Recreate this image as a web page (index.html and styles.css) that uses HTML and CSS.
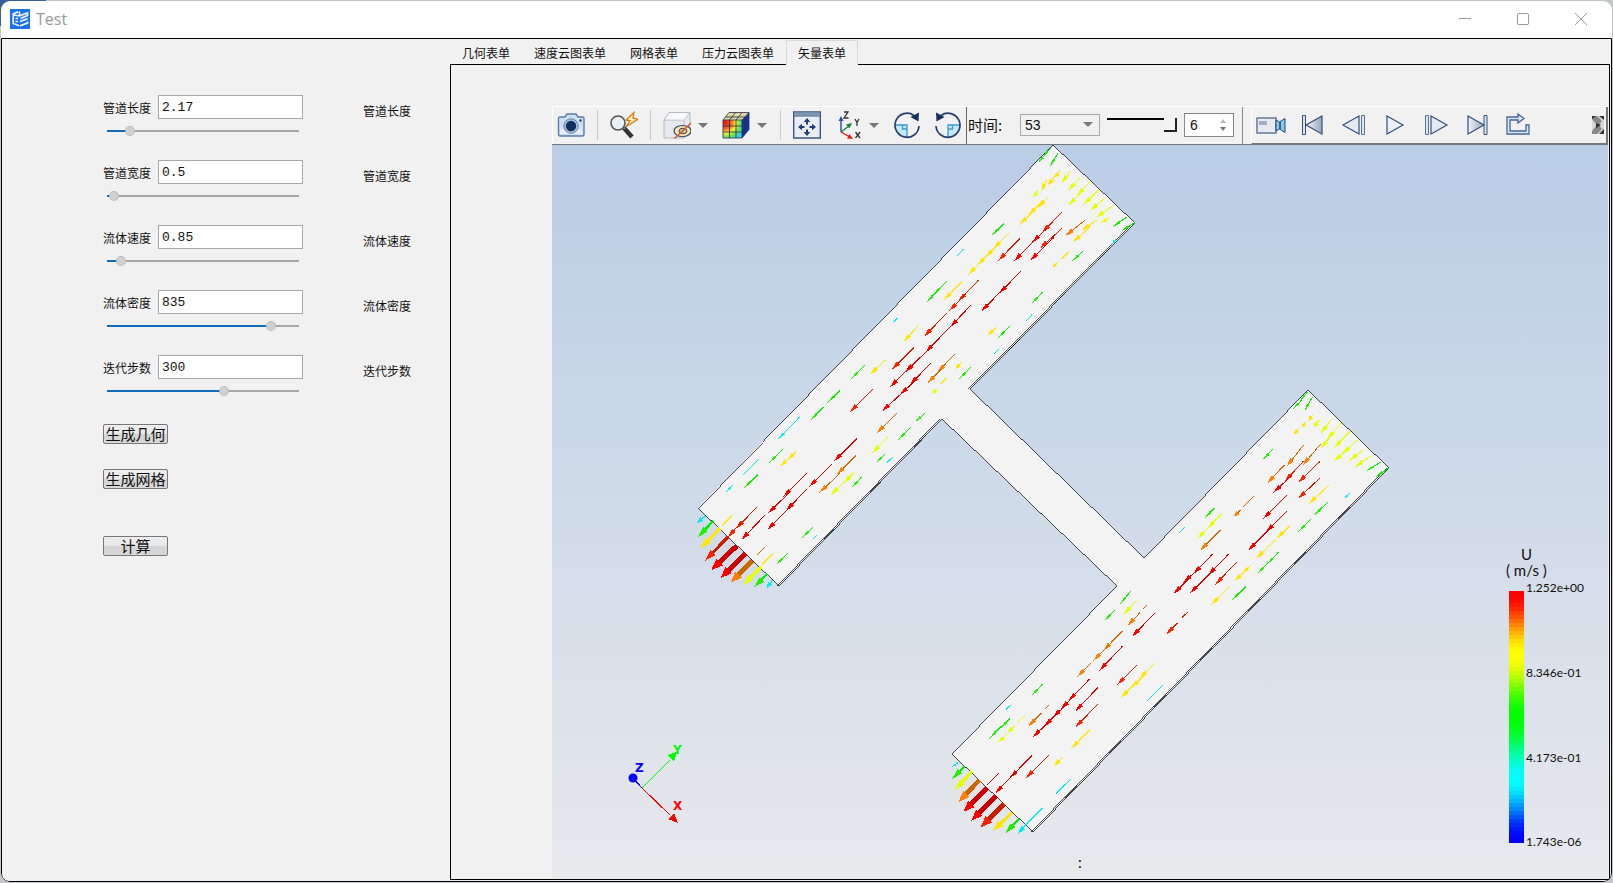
FILE: index.html
```html
<!DOCTYPE html>
<html lang="zh-CN">
<head>
<meta charset="utf-8">
<title>Test</title>
<link rel="stylesheet" href="styles.css">
</head>
<body>
<div class="window">
  <header class="titlebar">
    <svg class="logo" viewBox="0 0 20 20" aria-hidden="true">
      <rect width="20" height="20" fill="#1a73e8"/>
      <path d="M2.500 5.200L8 2.800M9.500 2.500v3.200M2.500 5.500l6.500 1.500 8.500-3v2.500L10.500 9.500M3.200 6v8.500l6 2.200M10 12.500l7.500-2.700M10 16.800l7.500-2.700v-1.500M5.500 9.500h2.500M5.500 12.500h2.500" fill="none" stroke="#f4f8ff" stroke-width="1.600"/>
    </svg>
    <h1 class="title">Test</h1>
    <div class="controls">
      <button class="control" type="button" aria-label="最小化"><svg viewBox="0 0 12 12"><path d="M0 5.500h12"/></svg></button>
      <button class="control" type="button" aria-label="最大化"><svg viewBox="0 0 12 12"><rect x=".5" y=".5" width="11" height="11" rx="1"/></svg></button>
      <button class="control" type="button" aria-label="关闭"><svg viewBox="0 0 12 12"><path d="M0 0l12 12M12 0L0 12"/></svg></button>
    </div>
  </header>

  <main class="frame">
    <form class="form">
      <div class="field">
        <label class="label" for="len">管道长度</label>
        <input class="box" id="len" type="text" value="2.17">
        <span class="label note">管道长度</span>
        <input class="slider" type="range" aria-label="管道长度" max="1000" value="99" style="--fill:10%">
      </div>
      <div class="field">
        <label class="label" for="wid">管道宽度</label>
        <input class="box" id="wid" type="text" value="0.5">
        <span class="label note">管道宽度</span>
        <input class="slider" type="range" aria-label="管道宽度" max="1000" value="11" style="--fill:2%">
      </div>
      <div class="field">
        <label class="label" for="vel">流体速度</label>
        <input class="box" id="vel" type="text" value="0.85">
        <span class="label note">流体速度</span>
        <input class="slider" type="range" aria-label="流体速度" max="1000" value="49" style="--fill:6%">
      </div>
      <div class="field">
        <label class="label" for="den">流体密度</label>
        <input class="box" id="den" type="text" value="835">
        <span class="label note">流体密度</span>
        <input class="slider" type="range" aria-label="流体密度" max="1000" value="874" style="--fill:86%">
      </div>
      <div class="field">
        <label class="label" for="itr">迭代步数</label>
        <input class="box" id="itr" type="text" value="300">
        <span class="label note">迭代步数</span>
        <input class="slider" type="range" aria-label="迭代步数" max="1000" value="615" style="--fill:61%">
      </div>
      <div class="actions">
        <button class="action" type="button">生成几何</button>
        <button class="action" type="button">生成网格</button>
        <button class="action run" type="button">计算</button>
      </div>
    </form>

    <section class="work">
      <nav class="tabs" role="tablist">
        <button class="tab" role="tab" type="button">几何表单</button>
        <button class="tab" role="tab" type="button">速度云图表单</button>
        <button class="tab" role="tab" type="button">网格表单</button>
        <button class="tab" role="tab" type="button">压力云图表单</button>
        <button class="tab active" role="tab" type="button" aria-selected="true">矢量表单</button>
      </nav>
      <div class="panel">
        <div class="viewer">
          <div class="toolbar">
            <div class="tools view-tools">
              <button class="tool" type="button" aria-label="截图"><svg viewBox="0 0 28 28"><path d="M1.500 7.500q0-1.500 1.500-1.500h5l2-3h9l2 3h4.500q1.500 0 1.500 1.500v16q0 1.500-1.500 1.500H3q-1.500 0-1.500-1.500z" fill="#cfdff2" stroke="#5b7ea8" stroke-width="1.400"/><path d="M3 18h22v5H3z" fill="#e6eef8"/><circle cx="14" cy="15" r="7.200" fill="#a9c1dc" stroke="#6482a8"/><circle cx="14" cy="15" r="5.200" fill="#12305e"/><circle cx="23.500" cy="9.500" r="1.200" fill="#27456f"/></svg></button>
              <i class="sep"></i>
              <button class="tool" type="button" aria-label="缩放"><svg viewBox="0 0 28 28"><path d="M14 17l8 9" stroke="#333" stroke-width="4.500"/><path d="M12 15l3 3" stroke="#777" stroke-width="2"/><circle cx="8" cy="12" r="7" fill="#e9f1f7" stroke="#555" stroke-width="1.600"/><path d="M24 1.500L16 9l4 .8-4 6 12-7.600-5-1z" fill="#fff1b8" stroke="#e07a10" stroke-width="1.300"/></svg></button>
              <i class="sep"></i>
              <button class="tool" type="button" aria-label="可见性"><svg viewBox="0 0 28 28"><path d="M1 9l5-7.500h21v19L21 27H1z" fill="#e6e9ee" stroke="#b4bac8"/><path d="M1 9h20v18M21 9l6-7.500" fill="none" stroke="#b4bac8"/><path d="M2 8.500L6.500 2H26l-5 6.500z" fill="#f8f9fb"/><ellipse cx="19.500" cy="20" rx="8.500" ry="5.500" fill="#fbe5ae" stroke="#31476b" stroke-width="1.200"/><ellipse cx="20" cy="20" rx="4" ry="2.800" fill="#d9c184" stroke="#31476b"/><path d="M11.500 27.500L28 12" stroke="#dd5533" stroke-width="1.500"/></svg></button>
              <button class="caret" type="button" aria-label="可见性选项"></button>
              <button class="tool color" type="button" aria-label="云图"><svg viewBox="0 0 28 28"><defs><radialGradient id="hot" cx=".1" cy=".15" r="1.150"><stop offset="0" stop-color="#f01010"/><stop offset=".3" stop-color="#fb6a2a"/><stop offset=".5" stop-color="#f8ee30"/><stop offset=".72" stop-color="#5ee060"/><stop offset=".9" stop-color="#38c8ee"/></radialGradient></defs><path d="M20 9l7-7.500v17L20 27z" fill="#1533a4"/><path d="M1 9l6-7.500h20L20 9z" fill="#dfd9a0"/><rect x="1" y="9" width="19" height="18" fill="url(#hot)"/><path d="M1 9l6-7.500h20v17L20 27H1zM1 9h19v18M20 9l7-7.500M7.500 27V9l6-7.500M14 27V9l6-7.500M1 15h19l7-7M1 21h19l7-7M3.500 6h19.500v17" fill="none" stroke="#24304a" stroke-width=".8"/></svg></button>
              <button class="caret" type="button" aria-label="云图选项"></button>
              <i class="sep tight"></i>
              <button class="tool" type="button" aria-label="适合窗口"><svg viewBox="0 0 28 28"><path d="M.7 1h26.600v26H.7z" fill="#e9edf4" stroke="#3c557f" stroke-width="1.400"/><path d="M1.500 1.500h25v3h-25z" fill="#7d95b5"/><path d="M1 5h26" stroke="#3c557f"/><path d="M14 7l3.300 4h-2.300v2.500h-2V11h-2.300zM14 25l3.300-4h-2.300v-2.500h-2V21h-2.300zM5 16l4-3.300V15h2.500v2H9v2.300zM23 16l-4-3.300V15h-2.500v2H19v2.300z" fill="#1f3f74"/></svg></button>
              <button class="tool axes" type="button" aria-label="视图方向"><svg viewBox="0 0 24 28"><path d="M3 21V8" stroke="#2a4fa8" stroke-width="1.400"/><path d="M3 5l2.500 5h-5z" fill="#2a4fa8"/><path d="M3 21l8-6" stroke="#14883c" stroke-width="1.400"/><path d="M14 12l-2.500 5.500-3.500-4z" fill="#14883c"/><path d="M3 21l8 4.500" stroke="#e41b1b" stroke-width="1.400"/><path d="M15 28l-6-.5 2.500-4.500z" fill="#e41b1b"/><path d="M6 1h4L6 7h4.500M17 8l2 3.500 2-3.500M19 11.500v3.500M17.500 21l4.500 6M22 21l-4.500 6" fill="none" stroke="#333" stroke-width="1.300"/></svg></button>
              <button class="caret" type="button" aria-label="视图方向选项"></button>
              <button class="tool turn" type="button" aria-label="顺时针旋转"><svg viewBox="0 0 28 28"><path d="M2 14h12v12A12 12 0 0 1 2 14z" fill="#c3e8fb"/><path d="M2 14h12v12" fill="none" stroke="#3b9bd0" stroke-width="1.300"/><path d="M9.500 14v4H14" fill="none" stroke="#3b9bd0" stroke-width="1.300"/><path d="M26 15A12 12 0 1 1 21 4.500" fill="none" stroke="#26406e" stroke-width="1.700"/><path d="M26 1.500l-.500 9-8-4.500z" fill="#16305e"/></svg></button>
              <button class="tool turn" type="button" aria-label="逆时针旋转"><svg viewBox="0 0 28 28"><path d="M26 14H14v12a12 12 0 0 0 12-12z" fill="#c3e8fb"/><path d="M26 14H14v12" fill="none" stroke="#3b9bd0" stroke-width="1.300"/><path d="M18.500 14v4H14" fill="none" stroke="#3b9bd0" stroke-width="1.300"/><path d="M2 15A12 12 0 1 0 7 4.500" fill="none" stroke="#26406e" stroke-width="1.700"/><path d="M2 1.500l.500 9 8-4.500z" fill="#16305e"/></svg></button>
            </div>
            <div class="tools time-tools">
              <label class="time-label" for="step">时间:</label>
              <span class="combo"><select id="step"><option>53</option></select></span>
              <input class="frame-slider" type="range" aria-label="帧" value="100">
              <span class="spin">
                <input type="text" aria-label="速度" value="6">
                <span class="spin-buttons"><button class="up" type="button" aria-label="增加"></button><button class="down" type="button" aria-label="减少"></button></span>
              </span>
            </div>
            <div class="tools play-tools">
              <button class="tool rec" type="button" aria-label="录制"><svg viewBox="0 0 30 28"><defs><linearGradient id="steel"><stop offset="0" stop-color="#f2f4f8"/><stop offset="1" stop-color="#9aa6b8"/></linearGradient></defs><rect x="1" y="7" width="19" height="15" fill="#e7ebf1" stroke="#5c7191" stroke-width="1.400"/><rect x="3" y="10" width="8" height="4" fill="#a6afbd"/><path d="M20 9l3.500 2L29 7.500v14L23.500 18 20 20z" fill="#8ac8ec" stroke="#234a78"/><path d="M24 11v7" stroke="#234a78" stroke-width="1.600"/></svg></button>
              <button class="tool first" type="button" aria-label="首帧"><svg viewBox="0 0 28 28"><path d="M3.500 4.500h3v19h-3z" fill="#dfe5ee" stroke="#34507e"/><path d="M23 5v18L7 14z" fill="url(#steel)" stroke="#34507e" stroke-width="1.200"/></svg></button>
              <button class="tool" type="button" aria-label="上一帧"><svg viewBox="0 0 28 28"><path d="M19 5v18L3 14z" fill="#e6ebf2" stroke="#34507e" stroke-width="1.200"/><path d="M21.500 4.500h3v19h-3z" fill="#dfe5ee" stroke="#5673a0"/></svg></button>
              <button class="tool" type="button" aria-label="播放"><svg viewBox="0 0 28 28"><path d="M6 5v18l16-9z" fill="#eaf0f7" stroke="#34507e" stroke-width="1.200"/></svg></button>
              <button class="tool" type="button" aria-label="下一帧"><svg viewBox="0 0 28 28"><path d="M9 5v18l16-9z" fill="#e6ebf2" stroke="#34507e" stroke-width="1.200"/><path d="M3.500 4.500h3v19h-3z" fill="#dfe5ee" stroke="#5673a0"/></svg></button>
              <button class="tool" type="button" aria-label="末帧"><svg viewBox="0 0 28 28"><path d="M21 4.500h3v19h-3z" fill="#dfe5ee" stroke="#34507e"/><path d="M5 5v18l16-9z" fill="url(#steel)" stroke="#34507e" stroke-width="1.200"/></svg></button>
              <button class="tool" type="button" aria-label="循环"><svg viewBox="0 0 28 28"><path d="M10 6H3v17h22v-9h-3v6H6V9h8v3l6-4.500L14 3v3z" fill="#dce8f4" stroke="#45669a" stroke-width="1.300"/></svg></button>
              <button class="tool more" type="button" aria-label="更多"><svg viewBox="0 0 12 18"><path d="M0 0h12v18H0z" fill="#888"/><path d="M0 3l5 6-5 6zM5 0l5 5-3 4 3 4-5 5h7V0z" fill="#d8d8d8"/><path d="M0 0h4l-4 3zM4 7l5 2-5 3zM7 0h5v4zM7 18h5v-5z" fill="#333"/></svg></button>
            </div>
          </div>

          <svg class="scene" viewBox="552 145 1056 734" role="img" aria-label="速度矢量图">
            <path class="body" d="M1053 145L1135 223L970 389L1144 558L1308 390L1389 468L1033 832L952 754L1117 586L942 419L779 586L698 508Z"/>
            <path class="edge" d="M1133 223L968 389M940 419L777 586M1387 468L1031 832"/>
            <path class="edge" d="M1110 248L1098 260M1066 292L1054 304M1020 339L1008 351M926 435L914 447M880 482L870 492M834 529L824 539M1350 507L1338 519M1306 552L1294 564M1260 599L1248 611M1212 648L1200 660M1166 695L1154 707M1121 741L1109 753M1077 786L1065 798"/>
            <g id="arrows"></g>
            <g class="triad">
              <path d="M642 788L670 760" stroke="#0f0"/><path d="M677 752l-3 10-7-7z" fill="#0f0"/>
              <path d="M642 788L670 815" stroke="#f00"/><path d="M678 823l-10-4 6-6z" fill="#f00"/>
              <path d="M642 788L633 778" stroke="#00f"/><circle cx="633" cy="778" r="4.500" fill="#00f"/>
              <text x="673" y="754" fill="#0f0">Y</text><text x="673" y="810" fill="#f00">X</text><text x="635" y="772" fill="#00f">Z</text>
            </g>
            <g id="bar"></g>
            <g class="legend">
              <text class="big" x="1521" y="560">U</text>
              <text class="big" x="1506" y="576">( m/s )</text>
              <text x="1526" y="592">1.252e+00</text>
              <text x="1526" y="677">8.346e-01</text>
              <text x="1526" y="762">4.173e-01</text>
              <text x="1526" y="846">1.743e-06</text>
              <text class="big" x="1078" y="868">:</text>
            </g>
          </svg>
        </div>
      </div>
    </section>
  </main>
</div>
<script src="arrows.js"></script>
</body>
</html>
```

FILE: styles.css
```css
* { box-sizing: border-box; }

body {
  margin: 0;
  height: 100vh;
  padding: 1px;
  overflow: hidden;
  background: linear-gradient(#3c5f9a, #3c5f9a) 0 0 / 46px 26px no-repeat #c4c6c8;
  font: 12px/16px "Noto Sans CJK SC", sans-serif;
  color: #111;
}

button, input, select { font: inherit; color: inherit; margin: 0; padding: 0; }
button { border: 0; background: none; }
svg { display: block; }

.window {
  height: 100%;
  display: flex;
  flex-direction: column;
  background: #fff;
  border-radius: 9px;
  overflow: hidden;
}

.titlebar { display: flex; align-items: center; height: 37px; padding: 0 2px 2px 9px; gap: 6px; }
.logo { width: 20px; height: 20px; }
.title { flex: 1; margin: 0; font: 16px/20px "Open Sans", sans-serif; color: #999; }
.controls { display: flex; }
.control { width: 58px; height: 34px; display: grid; place-items: center; }
.control svg { width: 12px; height: 12px; fill: none; stroke: #999; overflow: visible; }

.frame {
  flex: 1;
  min-height: 0;
  display: flex;
  border: 1px solid #000;
  border-radius: 0 0 8px 8px;
  background: #f1f1f1;
}

.form { width: 448px; padding: 56px 0 0 101px; }
.field {
  display: grid;
  grid-template-columns: 48px 145px 48px;
  grid-template-rows: 24px 16px;
  column-gap: 7px;
  row-gap: 4px;
  height: 65px;
}
.label { line-height: 25px; white-space: nowrap; }
.note { margin: 3px 0 0 53px; }
.box {
  width: 145px;
  height: 24px;
  padding: 1px 0 0 3px;
  border: 1px solid #a8a8a8;
  background: #fff;
  font: 13px/20px "Liberation Mono", monospace;
}
.slider {
  grid-column: 1 / 3;
  width: 192px;
  height: 16px;
  margin-left: 4px;
  appearance: none;
  background: linear-gradient(to right, #0f6cbd var(--fill), #a8a8a8 var(--fill)) 0 7px / 100% 2px no-repeat;
}
.slider::-webkit-slider-thumb {
  appearance: none;
  width: 10px;
  height: 10px;
  border-radius: 50%;
  border: 1px dotted #aaa;
  background: #d0d0d0;
}

.actions { display: flex; flex-direction: column; align-items: flex-start; gap: 25px; padding-top: 4px; }
.action {
  width: 65px;
  height: 20px;
  border: 1px solid #777;
  border-radius: 2px;
  background: linear-gradient(#eee 0, #e8e8e8 50%, #d4d4d4 50%, #d8d8d8 100%);
  font-size: 15px;
  line-height: 18px;
  white-space: nowrap;
}
.run { margin-top: 22px; }

.work { flex: 1; min-width: 0; display: flex; flex-direction: column; padding: 1px; padding-left: 0; }
.tabs { display: flex; height: 24px; }
.tab { padding: 2px 12px 0; height: 24px; white-space: nowrap; }
.tab.active {
  height: 25px;
  padding: 0 11px;
  border: 1px solid #d9d9d9;
  border-bottom-color: #f1f1f1;
  background: #f1f1f1;
  z-index: 1;
}
.panel { flex: 1; min-height: 0; padding: 41px 1px 0 101px; border: 1px solid #000; display: flex; }
.viewer { flex: 1; min-width: 0; display: flex; flex-direction: column; }

.toolbar { display: flex; height: 39px; border-top: 1px solid #fff; border-bottom: 1px solid #777; }
.tools { display: flex; align-items: center; padding-bottom: 1px; }
.tool { height: 28px; width: 28px; flex: none; }
.tool svg { width: 100%; height: 28px; }
.view-tools { padding-left: 4px; padding-right: 4px; border-left: 1px solid #fff; border-right: 1px solid #666; }
.sep { width: 1px; height: 30px; margin: 0 12px; background: #c8c8c8; }
.sep.tight { margin-left: 6px; }
.caret { width: 24px; height: 28px; display: grid; place-items: center; }
.caret::before, .combo::after {
  content: "";
  border: 5px solid transparent;
  border-top-color: #777;
  border-bottom: 0;
}
.color { margin-left: 7px; }
.axes { width: 24px; margin-left: 17px; }
.turn { margin-left: 7px; }
.turn + .turn { margin-left: 13px; }

.time-tools { padding-left: 1px; padding-right: 8px; border-right: 1px solid #888; }
.time-label { width: 52px; font-size: 15px; line-height: 20px; white-space: nowrap; }
.combo { position: relative; width: 80px; height: 22px; }
.combo select {
  appearance: none;
  width: 100%;
  height: 100%;
  padding-left: 4px;
  border: 1px solid #aaa;
  border-radius: 0;
  background: #f1f1f1;
  font: 14px/20px "Liberation Sans", sans-serif;
}
.combo::after { position: absolute; right: 7px; top: 8px; }
.frame-slider {
  appearance: none;
  width: 70px;
  height: 14px;
  margin: 0 7px;
  background: linear-gradient(#000, #000) 0 0 / 100% 2px no-repeat;
}
.frame-slider::-webkit-slider-thumb {
  appearance: none;
  width: 13px;
  height: 14px;
  border: solid #222;
  border-width: 0 2px 2px 0;
  background: #f4f4f4;
}
.spin { display: flex; width: 50px; height: 24px; border: 1px solid #888; background: #fff; }
.spin input { width: 35px; border: 0; padding-left: 5px; background: none; font: 14px/22px "Liberation Sans", sans-serif; }
.spin-buttons { display: flex; flex-direction: column; justify-content: center; gap: 4px; }
.up, .down { width: 0; height: 0; border: 3px solid transparent; }
.up { border-top: 0; border-bottom: 4px solid #bbb; }
.down { border-bottom: 0; border-top: 4px solid #777; }

.play-tools {
  flex: 1;
  min-width: 0;
  margin-left: 8px;
  gap: 13px;
  padding-left: 4px;
  padding-right: 2px;
  border-left: 1px solid #fff;
  border-right: 2px solid #777;
  border-bottom: 1px solid #777;
}
.rec { width: 30px; }
.more { width: 12px; height: 18px; margin-left: auto; }
.more svg { height: 18px; }

.scene { flex: 1; min-height: 0; width: 100%; background: linear-gradient(#b9cde5, #e7e9ec); }
.body { fill: #f3f3f3; stroke: #000; shape-rendering: crispEdges; stroke-width: 0.7; }
.edge { fill: none; stroke: #000; shape-rendering: crispEdges; stroke-width: 0.7; }
#arrows, #bar { shape-rendering: crispEdges; }
.triad path { shape-rendering: crispEdges; }
.triad text { font: bold 12px "DejaVu Sans", sans-serif; }
.legend { font: 12px Lato, sans-serif; fill: #111; }
.big { font-size: 15px; }
```

FILE: arrows.js
```js
// Vector samples by patch: tail x, tail y, tip x, tip y, optional shaft width.
// A leading "-" marks a vector whose head is hidden. Units are thirds of a pixel.
const patches = [
  { x: 900, y: 140, data: `g 452 24 428 52;g 440 40 412 70;g 474 40 448 82;y 480 92 464 114;l 510 95 484 130;y 465 108 442 138;y 440 118 424 154;l 414 150 400 172;l 538 115 504 152;l 570 125 530 168;l 550 152 505 196;l 596 150 550 194;l 614 175 570 212;l 638 197 588 233;l 630 232 604 248;y 445 170 413 204;y 430 180 385 226;y 402 212 358 254;o 486 216 426 278;r 440 265 396 308;r 400 304 342 364;o 486 265 420 325;r 462 292 390 362;o 360 295 295 362;O 556 240 496 288;y 590 240 545 272;y 570 262 518 306;g 682 230 636 262;g 704 248 662 274;c 648 298 636 312;-y 506 336 484 358;y 474 366 458 382;g 550 332 514 366;g 312 250 274 288;y 326 280 280 326;y 296 312 256 352;y 270 338 232 376;y 246 362 205 404;-c 190 328 172 348;r 362 394 298 460;r 312 444 244 514;g 140 424 100 464;g 110 456 78 488;y 186 424 132 480;o 236 420 175 484;o 196 464 148 512;g 428 456 394 492;-c 396 524 378 544;y 288 562 262 588;g 330 558 294 594;-c 298 626 282 642;r 212 496 150 562;r 160 550 76 638;r 92 622 14 698;o 140 520 72 590;y 56 556 10 606;o 42 622 -24 688;r 92 670 30 734;O 164 642 112 698;O 124 688 82 730;y 185 666 166 688;g 214 680 178 716;-y 140 714 122 732;l 114 744 96 762;-c -8 534 -20 546` },
  { x: 680, y: 360, data: `g 554 16 514 56;y 616 0 570 44;o 662 0 640 26;r 712 0 676 36;r 690 20 630 82;r 752 10 690 74;r 706 62 660 104;r 680 86 606 154;o 578 88 510 156;g 480 92 442 128;g 430 142 390 182;c 358 172 292 240;O 650 160 590 220;g 734 160 704 188;g 692 202 654 240;l 622 232 576 280;g 614 284 588 308;-c 638 292 620 308;g 308 268 268 308;y 348 274 326 298;y 330 292 300 320;-c 236 298 190 344;g 234 344 192 384;c 158 376 138 396;r 530 236 462 304;O 528 286 470 344;O 480 340 418 398;r 456 312 388 380;l 522 338 490 370;l 500 358 452 406;g 544 352 514 384;r 380 340 310 410;r 330 396 264 460;r 380 388 318 452;r 330 440 262 510;o 230 442 168 506;o 184 486 144 532;r 254 466 184 540;g 398 502 366 534;-c 410 526 400 536;g 324 580 288 614;-O 254 562 232 584;-y 278 582 246 614;-y 156 466 126 496;c 76 468 50 490 4;g 100 482 54 532 7;y 120 505 60 566 10;o 145 530 76 602 10;r 170 558 94 630 15;r 196 580 122 654 15;O 216 602 152 668 15;l 244 620 188 676 10;g 262 642 222 682 7;c 278 660 260 684 4` },
  { x: 1120, y: 380, data: `g 562 36 540 64;g 545 60 520 86;g 578 50 552 96;y 580 104 565 122;l 598 120 580 142;y 556 126 546 142;y 536 144 522 164;l 634 118 602 160;l 664 130 620 178;l 692 152 642 204;l 640 160 600 206;l 712 180 664 224;l 690 204 640 244;l 732 208 688 242;l 752 228 704 262;g 782 246 738 274;g 806 264 766 292;c 690 340 672 356;O 550 196 500 260;O 602 192 548 256;O 494 254 442 310;o 550 244 494 304;r 516 286 460 338;o 600 244 534 308;o 600 294 534 356;y 626 316 566 372;g 458 208 426 242;r 500 346 430 416;g 624 366 580 408;g 572 418 534 456;-O 402 348 370 380;O 362 390 342 410;g 284 384 252 416;l 304 402 262 446;l 270 438 232 476;-c 194 442 178 458;O 302 450 240 512;r 500 394 438 456;r 454 442 384 512;y 510 436 470 476;y 466 480 408 536;g 476 516 440 554;g 446 546 412 582;y 392 556 370 578;y 372 578 344 602;r 278 522 220 582;r 232 570 190 608;r 206 596 160 642;r 326 522 264 586;r 280 570 210 640;o 350 546 286 614;y 330 618 274 674;g 378 620 336 660` },
  { x: 930, y: 580, data: `g 602 34 570 72;l 620 60 580 104;-O 650 76 640 86;O 630 98 592 138;r 674 100 606 170;-o 774 96 756 112;o 742 130 708 164;g 554 90 522 124;O 578 152 520 212;O 538 194 490 242;O 482 250 442 290;r 578 198 508 272;o 622 254 562 314;y 674 250 628 296;y 642 288 602 324;y 616 310 572 354;-c 698 316 652 362;g 338 312 304 348;r 478 298 416 362;r 430 350 392 388;r 408 376 368 412;r 382 400 342 440;r 356 426 308 472;r 504 322 436 394;o 504 372 436 442;-O 356 376 346 386;O 334 400 294 440;-c 244 374 228 388;g 240 416 210 446;g 214 438 178 476;-l 284 406 262 428;l 254 438 234 458;l 230 464 206 486;y 480 448 424 506;y 398 532 372 558;-c 424 596 378 640;r 306 526 240 594;r 260 572 196 640;o 356 526 288 594;-c 338 684 280 742;-r 206 580 170 616;c 84 548 66 560 3;g 104 558 66 598 7;l 126 574 74 630 10;O 148 600 86 666 14;r 172 624 100 696 15;r 198 648 124 722 15;o 222 672 152 742 15;y 246 698 188 754 10;g 268 716 226 760 7;c 290 730 264 762 4` }
];
const tints = {
  r: ['#ff0000', '#cc0000'], o: ['#ff2200', '#cc1c00'], O: ['#ff8000', '#cc6600'],
  y: ['#ffe600', '#ffe600'], l: ['#e6ff00', '#e6ff00'], g: ['#22f000', '#00ee00'], c: ['#00eeee', '#00eeee']
};

let marks = '';
for (const patch of patches) {
  marks += `<g transform="translate(${patch.x} ${patch.y}) scale(${1 / 3})">`;
  for (const item of patch.data.split(';')) {
    const bare = item[0] === '-';
    const part = (bare ? item.slice(1) : item).split(' ');
    const [x1, y1, x2, y2, w = 3] = part.slice(1).map(Number);
    const [head, shaft] = tints[part[0]];
    const len = Math.hypot(x2 - x1, y2 - y1);
    const ux = (x2 - x1) / len, uy = (y2 - y1) / len;
    const size = Math.min(len * 0.6, w > 3 ? 34 : 27);
    const half = w > 3 ? 6 + w * 0.5 : part[0] === 'g' || part[0] === 'c' ? 4 : 7;
    const bx = x2 - ux * size, by = y2 - uy * size;
    const end = bare ? [x2, y2] : [x2 - ux * size / 2, y2 - uy * size / 2];
    marks += `<path d="M${x1} ${y1}L${end}" stroke="${shaft}" stroke-width="${w}"/>`;
    if (!bare) marks += `<path d="M${x2} ${y2}L${bx - uy * half} ${by + ux * half}L${bx + uy * half} ${by - ux * half}Z" fill="${head}"/>`;
  }
  marks += '</g>';
}
document.getElementById('arrows').innerHTML = marks;

// Colour bar in discrete bands.
const stops = [[255, 0, 0], [255, 255, 0], [0, 255, 0], [0, 255, 255], [0, 0, 255]];
let bands = '';
for (let i = 0; i < 63; i++) {
  const t = i / 62 * 4, k = Math.min(3, Math.floor(t)), f = t - k, s = f * f * (3 - 2 * f);
  const rgb = stops[k].map((v, j) => Math.round(v + (stops[k + 1][j] - v) * s));
  bands += `<rect x="1509" y="${591 + i * 4}" width="15" height="4" fill="rgb(${rgb})"/>`;
}
document.getElementById('bar').innerHTML = bands;
```
